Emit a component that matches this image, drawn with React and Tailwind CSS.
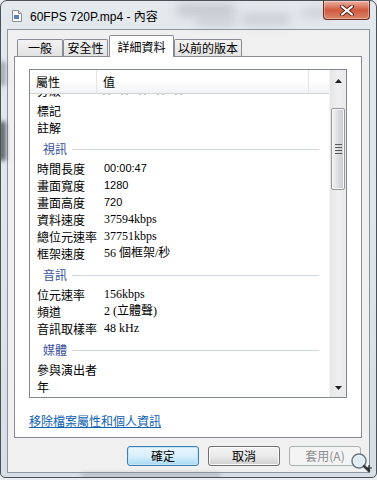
const CJK = "font-['Noto_Sans_CJK_TC',sans-serif]";

function Star() {
  return (
    <svg width="11" height="11" viewBox="0 0 11 11" className="shrink-0">
      <path
        d="M5.5 0.8 L6.9 4 L10.3 4.2 L7.7 6.4 L8.5 9.8 L5.5 8 L2.5 9.8 L3.3 6.4 L0.7 4.2 L4.1 4 Z"
        fill="none"
        stroke="#b8b8b8"
        strokeWidth="1"
      />
    </svg>
  );
}

function Row({ label, value, vf }) {
  return (
    <div className="h-[17px] flex items-center text-[12px] leading-[17px] text-black">
      <div className={`w-[74px] pl-[7px] whitespace-nowrap ${CJK}`}>{label}</div>
      <div className={`whitespace-nowrap ${vf}`}>{value}</div>
    </div>
  );
}

function Group({ label }) {
  return (
    <div className="h-[24px] flex items-center pl-[13px] pr-[10px]">
      <span className={`text-[12px] leading-[17px] text-[#3a4f9c] ${CJK}`}>{label}</span>
      <div className="flex-1 ml-[5px] h-px bg-[#cfd6dc] mt-[2px]" />
    </div>
  );
}

const SERIF = "font-['Liberation_Serif','Noto_Sans_CJK_TC',serif] text-[12px]";
const SANS = "font-['Liberation_Sans',sans-serif] text-[11px]";

function Tab({ w, children, selected }) {
  if (selected) {
    return (
      <div
        className={`relative z-10 -mb-px h-[22px] ml-px flex items-center justify-center border border-b-0 border-[#898c95] rounded-t-[2px] bg-white text-[12px] text-black ${CJK}`}
        style={{ width: w }}
      >
        {children}
      </div>
    );
  }
  return (
    <div
      className={`h-[17px] flex items-center justify-center border border-b-0 border-[#898c95] rounded-t-[2px] bg-gradient-to-b from-[#f3f3f3] to-[#e2e2e2] text-[12px] text-black leading-none ${CJK}`}
      style={{ width: w }}
    >
      {children}
    </div>
  );
}

function Button({ children, focused, disabled }) {
  let cls =
    "w-[72px] h-[20px] rounded-[3px] border flex items-center justify-center text-[12px] leading-none ";
  if (disabled) {
    cls += "border-[#adb2b5] bg-[#f4f4f4] text-[#8d8d8d]";
  } else if (focused) {
    cls +=
      "border-[#3c7fb1] bg-gradient-to-b from-[#eaf6fd] via-[#d9f0fc] to-[#a7d9f5] text-black shadow-[inset_0_0_0_1px_#c4e5f6]";
  } else {
    cls +=
      "border-[#707070] bg-gradient-to-b from-[#f2f2f2] via-[#ebebeb] to-[#cfcfcf] text-black shadow-[inset_0_0_0_1px_#fcfcfc]";
  }
  return <div className={`${cls} ${CJK}`}>{children}</div>;
}

export default function App() {
  return (
    <div className="w-[377px] h-[480px] bg-[#e9edf1] overflow-hidden">
      <div className="relative w-[377px] h-[478px] rounded-t-[7px] rounded-b-[5px] border border-[#4a5159] bg-gradient-to-b from-[#e4e9ee] via-[#dfe5eb] to-[#d7dee5] flex flex-col overflow-hidden">
        {/* glass blur blobs */}
        <div className="absolute left-[175px] top-[2px] w-[60px] h-[14px] rounded-full bg-[#9aa2aa] opacity-40 blur-[5px]" />
        <div className="absolute left-[240px] top-[12px] w-[50px] h-[12px] rounded-full bg-[#a4acb3] opacity-40 blur-[5px]" />
        <div className="absolute left-[195px] top-[16px] w-[40px] h-[10px] rounded-full bg-[#b0b6bc] opacity-40 blur-[4px]" />
        <div className="absolute left-[300px] top-[6px] w-[30px] h-[12px] rounded-full bg-[#b5bcc2] opacity-40 blur-[4px]" />
        <div className="absolute left-[-2px] top-[120px] w-[7px] h-[40px] rounded-full bg-[#2b2f33] opacity-70 blur-[2px]" />
        <div className="absolute left-[-2px] top-[60px] w-[7px] h-[25px] rounded-full bg-[#6b7075] opacity-50 blur-[2px]" />
        <div className="absolute left-[80px] bottom-[0px] w-[140px] h-[4px] rounded-full bg-[#8d949b] opacity-50 blur-[2px]" />

        {/* title bar */}
        <div className="relative h-[28px] shrink-0 flex items-center pl-[11px]">
          <svg width="10" height="12" viewBox="0 0 10 12" className="mt-[2px]">
            <path d="M0.5 0.5 H6.5 L9.5 3.5 V11.5 H0.5 Z" fill="#fbfbfb" stroke="#8a9097" />
            <path d="M6.5 0.5 V3.5 H9.5" fill="#e0e4e8" stroke="#8a9097" />
            <rect x="2" y="5" width="5" height="4" fill="#5b7fb6" />
          </svg>
          <span className="ml-[8px] mt-[3px] text-[12px] text-black font-['Liberation_Sans','Noto_Sans_CJK_TC',sans-serif]">
            60FPS 720P.mp4 - 內容
          </span>
          {/* close button */}
          <div className="absolute right-[6px] top-0 w-[47px] h-[19px] rounded-b-[4px] border border-t-0 border-[#6b2b20] bg-gradient-to-b from-[#eab1a3] via-[#cf5a3f] to-[#d98569] flex items-center justify-center shadow-[inset_0_0_0_1px_rgba(255,255,255,0.35)]">
            <svg width="14" height="11" viewBox="0 0 14 11">
              <path d="M2 1.5 L12 9.5 M12 1.5 L2 9.5" stroke="#5c2318" strokeWidth="4" strokeLinecap="round" />
              <path d="M2 1.5 L12 9.5 M12 1.5 L2 9.5" stroke="#ffffff" strokeWidth="2.2" strokeLinecap="round" />
            </svg>
          </div>
        </div>

        {/* client area */}
        <div className="mx-[6px] h-[444px] shrink-0 border border-[#8c949c] bg-[#f0f0f0] flex flex-col">
          {/* tabs */}
          <div className="h-[26px] shrink-0 flex items-end pl-[9px]">
            <Tab w={46}>一般</Tab>
            <Tab w={45}>安全性</Tab>
            <Tab w={65} selected>詳細資料</Tab>
            <Tab w={68}>以前的版本</Tab>
          </div>
          {/* panel */}
          <div className="ml-[6px] w-[348px] h-[382px] shrink-0 border border-[#898c95] bg-white flex flex-col pt-[12px] pl-[14px]">
            {/* list box */}
            <div className="w-[318px] h-[329px] border border-[#828790] flex">
              <div className="w-[299px] flex flex-col">
                {/* header */}
                <div className={`h-[24px] shrink-0 flex border-b border-[#d5d5d5] bg-gradient-to-b from-[#ffffff] via-[#ffffff] to-[#f1f2f4] text-[12px] text-black ${CJK}`}>
                  <div className="w-[67px] pl-[6px] flex items-center border-r border-[#e3e5e8]">屬性</div>
                  <div className="w-[212px] pl-[6px] flex items-center border-r border-[#e3e5e8]">值</div>
                  <div className="flex-1" />
                </div>
                {/* rows */}
                <div className="flex-1 overflow-hidden">
                  <div className="-mt-[9px]">
                    <div className="h-[17px] flex items-center pb-[7px] text-[12px] leading-[17px] overflow-hidden">
                      <div className={`w-[71px] pl-[7px] ${CJK}`}>分級</div>
                      <div className="flex gap-[7px]">
                        <Star />
                        <Star />
                        <Star />
                        <Star />
                        <Star />
                      </div>
                    </div>
                    <Row label="標記" value="" />
                    <Row label="註解" value="" />
                    <Group label="視訊" />
                    <Row label="時間長度" value="00:00:47" vf={SANS} />
                    <Row label="畫面寬度" value="1280" vf={SANS} />
                    <Row label="畫面高度" value="720" vf={SANS} />
                    <Row label="資料速度" value="37594kbps" vf={SERIF} />
                    <Row label="總位元速率" value="37751kbps" vf={SERIF} />
                    <Row label="框架速度" value="56 個框架/秒" vf={SERIF} />
                    <Group label="音訊" />
                    <Row label="位元速率" value="156kbps" vf={SERIF} />
                    <Row label="頻道" value="2 (立體聲)" vf={SERIF} />
                    <Row label="音訊取樣率" value="48 kHz" vf={SERIF} />
                    <Group label="媒體" />
                    <Row label="參與演出者" value="" />
                    <Row label="年" value="" />
                  </div>
                </div>
              </div>
              {/* scrollbar */}
              <div className="w-[17px] bg-gradient-to-r from-[#e6e6e6] via-[#efefef] to-[#e9e9e9] border-l border-[#f6f6f6] flex flex-col items-center">
                <div className="h-[17px] w-full flex items-center justify-center shrink-0 mt-[2px]">
                  <svg width="7" height="4" viewBox="0 0 7 4">
                    <path d="M0 4 L3.5 0 L7 4 Z" fill="#202020" />
                  </svg>
                </div>
                <div className="mt-[19px] w-[14px] h-[82px] rounded-[2px] border border-[#989898] bg-gradient-to-r from-[#f3f3f5] via-[#dcdde2] to-[#c9cacf] flex flex-col items-center justify-center gap-[2px] shadow-[inset_0_0_0_1px_#f8f8f8]">
                  <div className="w-[7px] h-px bg-[#5a5a5a]" />
                  <div className="w-[7px] h-px bg-[#5a5a5a]" />
                  <div className="w-[7px] h-px bg-[#5a5a5a]" />
                  <div className="w-[7px] h-px bg-[#5a5a5a]" />
                </div>
                <div className="flex-1" />
                <div className="h-[17px] w-full flex items-center justify-center shrink-0 mb-[1px]">
                  <svg width="7" height="4" viewBox="0 0 7 4">
                    <path d="M0 0 L7 0 L3.5 4 Z" fill="#202020" />
                  </svg>
                </div>
              </div>
            </div>
            {/* link */}
            <div className="mt-[10px]">
              <span className={`text-[12px] leading-[14px] text-[#0d61b5] underline ${CJK}`}>
                移除檔案屬性和個人資訊
              </span>
            </div>
          </div>
          {/* buttons */}
          <div className="mt-[8px] flex justify-end gap-[9px] pr-[8px]">
            <Button focused>確定</Button>
            <Button>取消</Button>
            <Button disabled>套用(A)</Button>
          </div>
        </div>

        {/* magnifier overlay */}
        <svg
          width="24"
          height="22"
          viewBox="0 0 24 22"
          className="absolute right-[2px] bottom-[3px]"
        >
          <circle cx="9" cy="9" r="7" fill="#eef4f8" stroke="#6b7680" strokeWidth="1.5" />
          <circle cx="9" cy="9" r="5" fill="#dfeaf2" />
          <path d="M14 14 L19 19" stroke="#3a3f44" strokeWidth="2.5" strokeLinecap="round" />
          <path d="M19 13 V19 M16 16 H22" stroke="#222" strokeWidth="1.2" />
        </svg>
      </div>
    </div>
  );
}
